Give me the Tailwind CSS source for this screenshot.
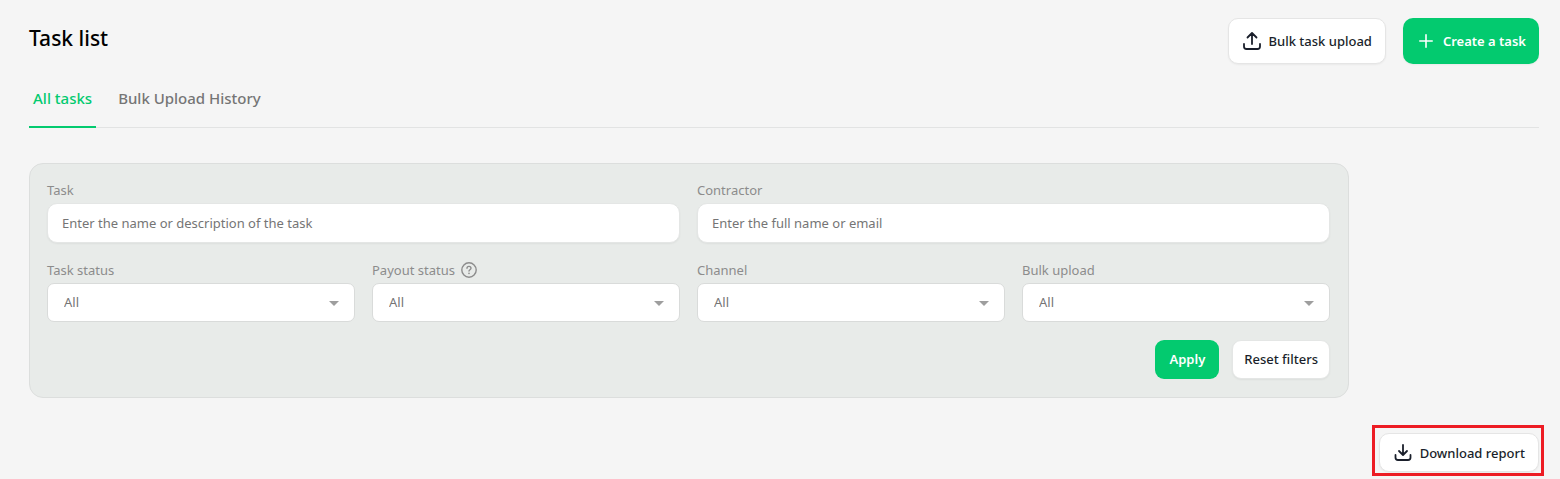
<!DOCTYPE html>
<html lang="en">
<head>
  <meta charset="UTF-8">
  <meta name="viewport" content="width=device-width, initial-scale=1.0">
  <title>Task list</title>
  <script src="https://cdn.jsdelivr.net/npm/@tailwindcss/browser@4"></script>
</head>
<body class="bg-[#f5f5f5] font-['Noto_Sans',sans-serif] text-[13px] leading-5">

  <div class="pl-[29px] pr-[21px] pt-[18px]">

    <!-- Header -->
    <header class="flex items-start justify-between">
      <h1 class="pt-1 text-[21px] leading-8 font-medium text-black">Task list</h1>
      <div class="flex gap-[17px]">
        <button class="flex h-[46px] items-center gap-[6px] rounded-[10px] border border-[#e5e5e5] bg-white pl-3 pr-[13px] font-medium text-[#1a1f2b] shadow-xs">
          <svg class="h-[22px] w-[22px]" viewBox="0 0 22 22" fill="none" stroke="currentColor" stroke-width="1.8" stroke-linecap="round" stroke-linejoin="round">
            <path d="M11 14V3.500M6.500 7.500L11 3l4.500 4.500M3 14v2.500c0 1.400 1 2.500 2.500 2.500h11c1.500 0 2.500-1.100 2.500-2.500V14" />
          </svg>
          Bulk task upload
        </button>
        <button class="flex h-[46px] items-center gap-[6px] rounded-[10px] bg-[#03ca6f] pl-3 pr-[13px] font-semibold text-white shadow-xs">
          <svg class="h-[22px] w-[22px]" viewBox="0 0 22 22" fill="none" stroke="currentColor" stroke-width="1.6" stroke-linecap="round">
            <path d="M11 4.800v12.400M4.800 11h12.400" />
          </svg>
          Create a task
        </button>
      </div>
    </header>

    <!-- Tabs -->
    <nav class="mt-[22px] flex gap-[18px] border-b border-[#e2e3e3] text-[15px] font-medium">
      <a href="#all" class="-mb-px border-b-2 border-[#03ca6f] px-1 pt-[2px] pb-[18px] text-[#03ca6f]">All tasks</a>
      <a href="#history" class="-mb-px px-1 pt-[2px] pb-5 text-[#757575]">Bulk Upload History</a>
    </nav>

    <!-- Filters -->
    <form class="mt-[35px] max-w-[1320px] rounded-[14px] border border-[#dcdedd] bg-[#e8ebe9] pt-4 pr-[18px] pb-[18px] pl-[17px] text-[#8c8c8c]">
      <div class="grid grid-cols-2 gap-x-[17px]">
        <div class="flex flex-col gap-[3px]">
          <label for="task">Task</label>
          <input id="task" type="text" placeholder="Enter the name or description of the task" class="h-10 w-full rounded-[10px] border border-[#e4e6e5] bg-white px-[14px] placeholder:text-[#757575] shadow-xs">
        </div>
        <div class="flex flex-col gap-[3px]">
          <label for="contractor">Contractor</label>
          <input id="contractor" type="text" placeholder="Enter the full name or email" class="h-10 w-full rounded-[10px] border border-[#e4e6e5] bg-white px-[14px] placeholder:text-[#757575] shadow-xs">
        </div>
      </div>

      <div class="mt-[17px] grid grid-cols-4 gap-x-[17px]">
        <div class="flex flex-col gap-[3px]">
          <label for="taskStatus">Task status</label>
          <div class="relative">
            <select id="taskStatus" class="h-[39px] w-full appearance-none rounded-[7px] border border-[#d9dbda] bg-white px-4 pb-[2px] text-[#757575]">
              <option>All</option>
            </select>
            <svg class="pointer-events-none absolute top-[18px] right-4 h-[5px] w-[10px] fill-[#9e9e9e]" viewBox="0 0 10 5"><path d="M0 0h10L5 5z" /></svg>
          </div>
        </div>
        <div class="flex flex-col gap-[3px]">
          <div class="flex h-5 items-center gap-[6px]">
            <label for="payoutStatus">Payout status</label>
            <svg class="h-4 w-4" viewBox="0 0 16 16" fill="none" stroke="currentColor" stroke-width="1.4" stroke-linecap="round" stroke-linejoin="round">
              <circle cx="8" cy="8" r="7.200" />
              <path d="M6 6.300C6 5.100 6.900 4.400 8 4.400s2 .7 2 1.800c0 1.500-2 1.600-2 2.900" />
              <path d="M8 11.400v.1" stroke-width="1.6" />
            </svg>
          </div>
          <div class="relative">
            <select id="payoutStatus" class="h-[39px] w-full appearance-none rounded-[7px] border border-[#d9dbda] bg-white px-4 pb-[2px] text-[#757575]">
              <option>All</option>
            </select>
            <svg class="pointer-events-none absolute top-[18px] right-4 h-[5px] w-[10px] fill-[#9e9e9e]" viewBox="0 0 10 5"><path d="M0 0h10L5 5z" /></svg>
          </div>
        </div>
        <div class="flex flex-col gap-[3px]">
          <label for="channel">Channel</label>
          <div class="relative">
            <select id="channel" class="h-[39px] w-full appearance-none rounded-[7px] border border-[#d9dbda] bg-white px-4 pb-[2px] text-[#757575]">
              <option>All</option>
            </select>
            <svg class="pointer-events-none absolute top-[18px] right-4 h-[5px] w-[10px] fill-[#9e9e9e]" viewBox="0 0 10 5"><path d="M0 0h10L5 5z" /></svg>
          </div>
        </div>
        <div class="flex flex-col gap-[3px]">
          <label for="bulkUpload">Bulk upload</label>
          <div class="relative">
            <select id="bulkUpload" class="h-[39px] w-full appearance-none rounded-[7px] border border-[#d9dbda] bg-white px-4 pb-[2px] text-[#757575]">
              <option>All</option>
            </select>
            <svg class="pointer-events-none absolute top-[18px] right-4 h-[5px] w-[10px] fill-[#9e9e9e]" viewBox="0 0 10 5"><path d="M0 0h10L5 5z" /></svg>
          </div>
        </div>
      </div>

      <div class="mt-[18px] flex justify-end gap-[13px]">
        <button type="submit" class="h-[39px] rounded-[9px] bg-[#03ca6f] px-[14px] pb-[2px] font-semibold text-white">Apply</button>
        <button type="reset" class="h-[39px] rounded-[9px] border border-[#e4e6e5] bg-white px-[11px] pb-[2px] font-medium text-[#1a1f2b] shadow-xs">Reset filters</button>
      </div>
    </form>

    <!-- Report -->
    <div class="mt-[27px] -mr-[5px] flex justify-end">
      <div class="border-3 border-[#ed1c24] pt-[5px] pr-[2px] pb-px pl-1">
        <button class="flex h-[39px] items-center gap-[6px] rounded-[10px] border border-[#e5e5e5] bg-white pl-3 pr-[13px] font-medium text-[#1a1f2b] shadow-xs">
          <svg class="h-[22px] w-[22px]" viewBox="0 0 22 22" fill="none" stroke="currentColor" stroke-width="1.8" stroke-linecap="round" stroke-linejoin="round">
            <path d="M11 3v9.500M7 9l4 4 4-4M3.500 13v2.500c0 1.400 1 2.500 2.500 2.500h10c1.500 0 2.500-1.100 2.500-2.500V13" />
          </svg>
          Download report
        </button>
      </div>
    </div>

  </div>

</body>
</html>
